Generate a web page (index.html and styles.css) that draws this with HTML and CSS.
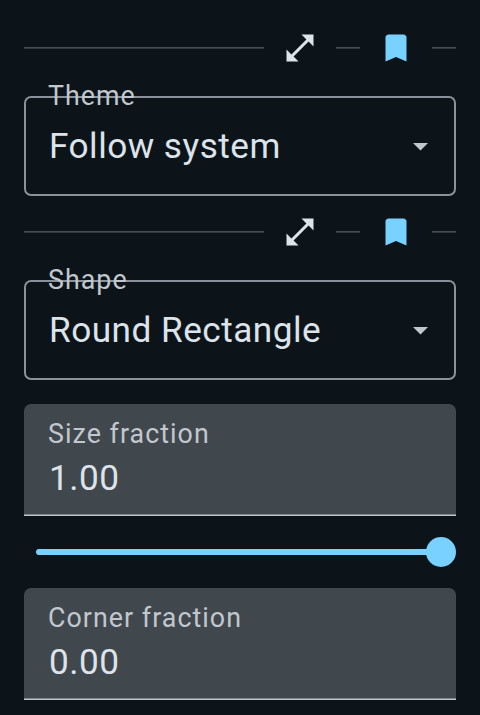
FILE: index.html
```html
<!DOCTYPE html>
<html lang="en">
<head>
<meta charset="utf-8">
<title>Icon shape settings</title>
<link rel="stylesheet" href="styles.css">
</head>
<body>
<main class="settings">
  <div class="divider">
    <span class="line line-long"></span>
    <svg class="icon icon-expand" viewBox="0 0 24 24"><path d="M21 11V3h-8l3.29 3.29-10 10L3 13v8h8l-3.29-3.29 10-10z"/></svg>
    <span class="line"></span>
    <svg class="icon icon-bookmark" viewBox="0 0 24 24"><path d="M17 3H7c-1.1 0-2 .9-2 2v16l7-3 7 3V5c0-1.100-.9-2-2-2z"/></svg>
    <span class="line"></span>
  </div>
  <div class="select">
    <span class="label select-label">Theme</span>
    <span class="value">Follow system</span>
    <svg class="arrow" viewBox="0 0 15 8"><path d="M0 0h15L7.500 7.500z"/></svg>
  </div>
  <div class="divider">
    <span class="line line-long"></span>
    <svg class="icon icon-expand" viewBox="0 0 24 24"><path d="M21 11V3h-8l3.29 3.29-10 10L3 13v8h8l-3.29-3.29 10-10z"/></svg>
    <span class="line"></span>
    <svg class="icon icon-bookmark" viewBox="0 0 24 24"><path d="M17 3H7c-1.1 0-2 .9-2 2v16l7-3 7 3V5c0-1.100-.9-2-2-2z"/></svg>
    <span class="line"></span>
  </div>
  <div class="select">
    <span class="label select-label">Shape</span>
    <span class="value">Round Rectangle</span>
    <svg class="arrow" viewBox="0 0 15 8"><path d="M0 0h15L7.500 7.500z"/></svg>
  </div>
  <div class="field">
    <span class="label">Size fraction</span>
    <span class="value">1.00</span>
  </div>
  <div class="slider">
    <span class="track"></span>
    <span class="thumb"></span>
  </div>
  <div class="field">
    <span class="label">Corner fraction</span>
    <span class="value">0.00</span>
  </div>
</main>
</body>
</html>
```
FILE: styles.css
```css
* {
  box-sizing: border-box;
}

body {
  margin: 0;
  background: #0c141a;
  color: #dde3ea;
  font-family: Roboto, sans-serif;
}

.settings {
  display: flex;
  flex-direction: column;
  height: 715px;
  padding: 0 24px;
  overflow: hidden;
}

.divider {
  display: flex;
  align-items: center;
}

.divider:first-child {
  height: 96px;
}

.select + .divider {
  height: 72px;
  margin-bottom: 12px;
}

.line {
  flex: none;
  width: 24px;
  height: 2px;
  background: linear-gradient(#454c52 50%, #31383e 50%);
}

.line-long {
  width: 240px;
}

.icon {
  flex: none;
  width: 36px;
  height: 36px;
  margin: 0 18px;
}

.icon-expand {
  fill: #dde3ea;
}

.icon-bookmark {
  fill: #79d1ff;
}

.select {
  position: relative;
  display: flex;
  align-items: center;
  justify-content: space-between;
  height: 100px;
  padding: 0 26px 0 23px;
  border: 2px solid #8b9198;
  border-radius: 7px;
}

.label {
  color: #c1c7ce;
  font-size: 26.8px;
  line-height: 32px;
  letter-spacing: 1.04px;
  white-space: nowrap;
}

.select-label {
  position: absolute;
  top: -18px;
  left: 22px;
}

.value {
  font-size: 35.2px;
  line-height: 48px;
  letter-spacing: 0.48px;
  white-space: nowrap;
}

.arrow {
  width: 15px;
  height: 8px;
  margin: 2px 0.5px 0 0;
  fill: #c1c7ce;
}

.field {
  display: flex;
  flex-direction: column;
  flex: none;
  height: 112px;
  padding: 14px 25px 0 24px;
  border-radius: 7px 7px 0 0;
  background: linear-gradient(#82888e, #82888e) 0 110px / 100% 1px no-repeat,
    linear-gradient(#c1c7ce, #c1c7ce) 0 111px / 100% 1px no-repeat,
    #41484d;
}

.field .value {
  margin: 4px 0 0 1px;
}

.select + .field {
  margin-top: 24px;
}

.slider {
  display: flex;
  align-items: center;
  height: 72px;
  padding-left: 12px;
}

.track {
  flex: 1;
  height: 6px;
  margin-right: -4px;
  border-radius: 3px;
  background: #79d1ff;
}

.thumb {
  width: 30px;
  height: 30px;
  border-radius: 50%;
  background: #79d1ff;
}
```
